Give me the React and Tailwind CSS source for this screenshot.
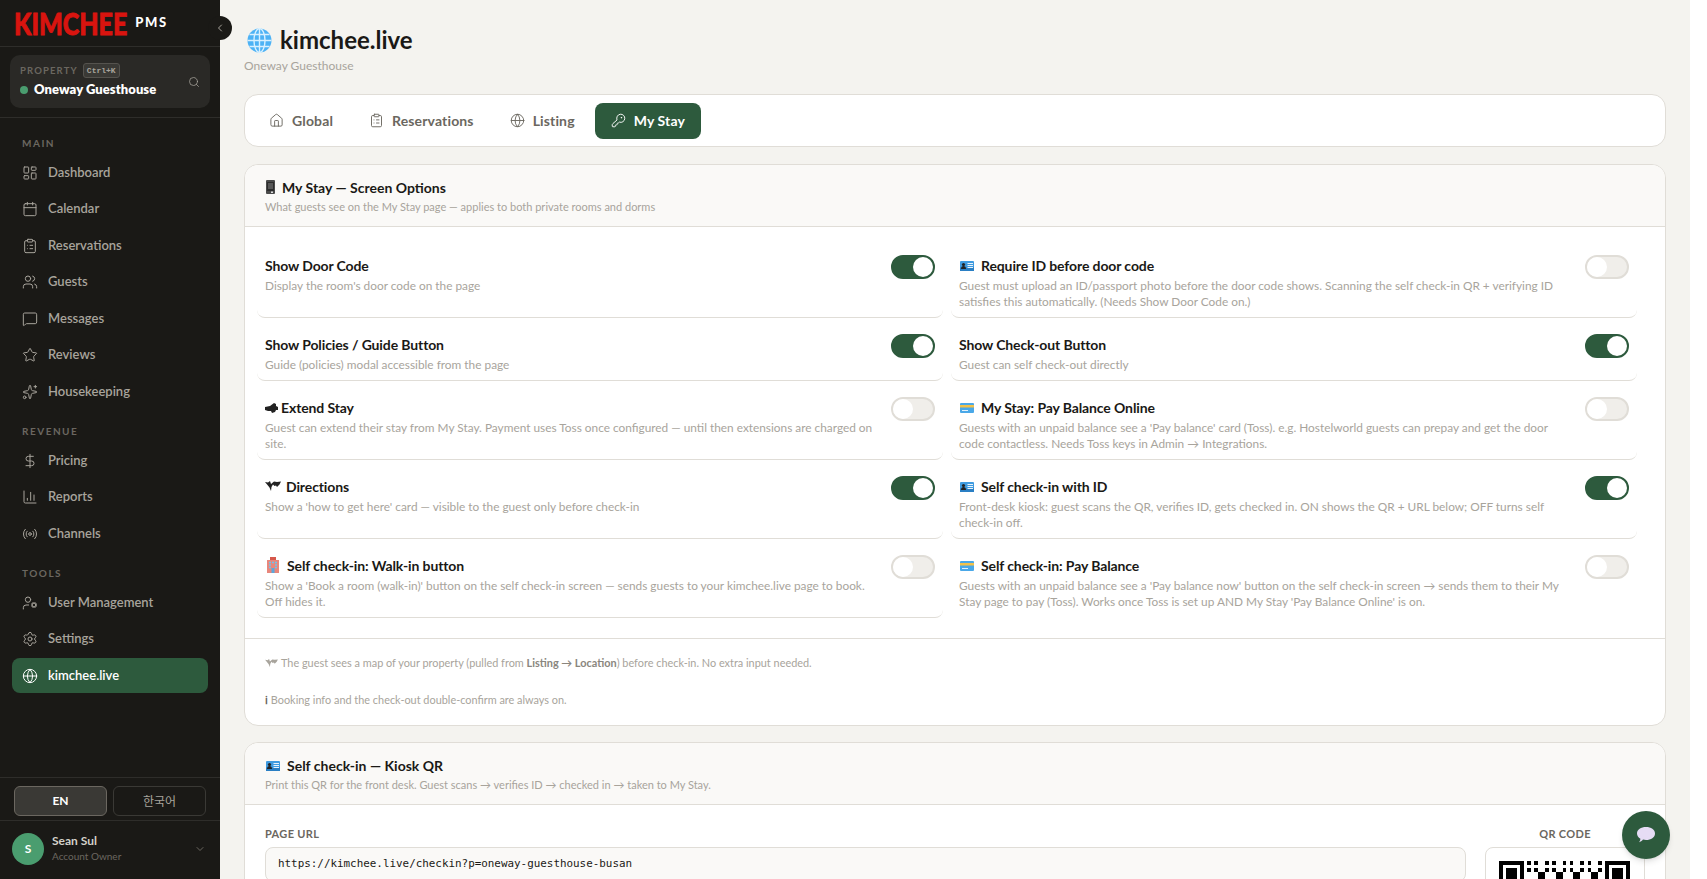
import React from 'react';
import {
  LayoutDashboard, Calendar, ClipboardList, Users, MessageSquare, Star, Sparkles,
  DollarSign, ChartColumn, Radio, UserCog, Settings, Globe, Search, ChevronLeft,
  ChevronDown, House, KeyRound,
} from 'lucide-react';

const mainNav = [
  { label: 'Dashboard', icon: LayoutDashboard },
  { label: 'Calendar', icon: Calendar },
  { label: 'Reservations', icon: ClipboardList },
  { label: 'Guests', icon: Users },
  { label: 'Messages', icon: MessageSquare },
  { label: 'Reviews', icon: Star },
  { label: 'Housekeeping', icon: Sparkles },
];
const revenueNav = [
  { label: 'Pricing', icon: DollarSign },
  { label: 'Reports', icon: ChartColumn },
  { label: 'Channels', icon: Radio },
];
const toolsNav = [
  { label: 'User Management', icon: UserCog },
  { label: 'Settings', icon: Settings },
  { label: 'kimchee.live', icon: Globe, active: true },
];

function NavItem({ item }) {
  const Icon = item.icon;
  return (
    <div
      className={`flex h-[35px] items-center gap-[10px] rounded-lg px-[10px] text-[13px] font-semibold ${
        item.active ? 'bg-[#2d5a3d] text-white' : 'text-[#a8a49c]'
      }`}
    >
      <Icon size={16} strokeWidth={1.5} />
      <span>{item.label}</span>
    </div>
  );
}

function NavGroup({ label, items, className }) {
  return (
    <div className={className}>
      <div className="mb-[5px] h-[14px] pl-[10px] text-[10px] leading-[14px] font-bold tracking-[0.15em] text-[#6b6760]">{label}</div>
      <div className="flex flex-col gap-[1.5px]">
        {items.map((item) => (
          <NavItem key={item.label} item={item} />
        ))}
      </div>
    </div>
  );
}

function Sidebar() {
  return (
    <aside className="relative flex h-full w-[220px] shrink-0 flex-col bg-[#1a1916]">
      <div className="flex h-[47px] items-center gap-2 border-b border-[#2e2d2a] pl-[14px]">
        <span className="inline-block scale-y-[1.2] text-[25px] leading-none font-black text-[#d9140f] [-webkit-text-stroke:0.7px_#d9140f]">KIMCHEE</span>
        <span className="text-[13px] font-black tracking-[0.12em] text-white">PMS</span>
      </div>
      <div className="border-b border-[#2e2d2a] px-[10px] pt-2 pb-[9px]">
        <div className="flex h-[53px] items-center justify-between rounded-[10px] bg-[#2a2926] px-[10px]">
          <div>
            <div className="flex items-center gap-[5px]">
              <span className="text-[9.5px] font-bold tracking-[0.12em] text-[#6b6760]">PROPERTY</span>
              <span className="rounded-[3px] border border-[#55534e] bg-[#3a3935] px-[3px] font-['Liberation_Mono'] text-[8px] leading-[13px] font-bold text-[#a8a49c]">Ctrl+K</span>
            </div>
            <div className="mt-[2px] flex items-center gap-[6px]">
              <span className="h-2 w-2 rounded-full bg-[#4a9d6f]" />
              <span className="text-[13px] font-extrabold tracking-[0.005em] text-white">Oneway Guesthouse</span>
            </div>
          </div>
          <Search size={12} strokeWidth={1.5} className="text-[#a8a49c]" />
        </div>
      </div>
      <div className="flex-1 px-[12px] pt-[18px]">
        <NavGroup label="MAIN" items={mainNav} />
        <NavGroup label="REVENUE" items={revenueNav} className="mt-[15px]" />
        <NavGroup label="TOOLS" items={toolsNav} className="mt-[15px]" />
      </div>
      <div className="flex h-[44px] gap-[6px] border-y border-[#2e2d2a] px-[14px] pt-2">
        <div className="flex h-[30px] flex-1 items-center justify-center rounded-md border border-[#6b6760] bg-[#3a3935] text-[12px] font-bold text-white">EN</div>
        <div className="flex h-[30px] flex-1 items-center justify-center rounded-md border border-[#3a3935] font-['Noto_Sans_CJK_KR'] text-[12px] text-[#a8a49c]">한국어</div>
      </div>
      <div className="flex h-[58px] items-start gap-2 px-3 pt-[12px]">
        <div className="flex h-8 w-8 items-center justify-center rounded-full bg-[#4a9d6f] text-[12px] font-bold text-white">S</div>
        <div className="flex-1">
          <div className="text-[12px] leading-[16px] font-bold text-[#d4d1ca]">Sean Sul</div>
          <div className="text-[10px] leading-[14px] text-[#6b6760]">Account Owner</div>
        </div>
        <ChevronDown size={12} className="mt-[10px] mr-[2px] text-[#6b6760]" />
      </div>
      <div className="absolute top-4 -right-3 flex h-6 w-6 items-center justify-center rounded-full bg-[#1a1916] text-[#a8a49c]">
        <ChevronLeft size={12} />
      </div>
    </aside>
  );
}

function GlobeEmoji() {
  return (
    <svg width="25" height="25" viewBox="0 0 25 25" fill="none">
      <circle cx="12.5" cy="12.5" r="12" fill="#4db2f5" />
      <g stroke="#d8f0ff" strokeWidth="1.4">
        <ellipse cx="12.5" cy="12.5" rx="5.5" ry="12" />
        <path d="M12.5 .5v24M.5 12.5h24M2.5 6.5h20M2.5 18.5h20" />
      </g>
    </svg>
  );
}

function PhoneEmoji() {
  return (
    <svg width="11" height="14" viewBox="0 0 11 14">
      <rect x="1" width="9" height="14" rx="1" fill="#4a4a4a" />
      <rect x="2" y="2" width="7" height="9" fill="#2c2c2c" />
      <path d="M3 4h5M3 6h5M3 8h5" stroke="#9a9a9a" strokeWidth=".8" />
      <rect x="6" y="11.5" width="2" height="1.5" fill="#ddd" />
    </svg>
  );
}

function IdEmoji() {
  return (
    <svg width="16" height="12" viewBox="-1 0 16 12" className="mt-[2px]">
      <rect y="1" width="14" height="10" rx="1" fill="#3f9be0" />
      <rect y="7.5" width="14" height="3.5" fill="#2a7fc4" />
      <circle cx="3.5" cy="4.5" r="1.6" fill="#222" />
      <path d="M1 9c0-2 1-3 2.5-3S6 7 6 9z" fill="#222" />
      <path d="M7.5 3.5H13M7.5 5.5H13M7.5 7.5H13" stroke="#e8f3fb" />
    </svg>
  );
}

function CardEmoji() {
  return (
    <svg width="16" height="12" viewBox="-1 0 16 12" className="mt-[2px]">
      <rect y="1" width="14" height="10" rx="1" fill="#4aa8e8" />
      <rect y="3" width="14" height="2.5" fill="#f2c14a" />
      <path d="M2 8.5h6" stroke="#e3f2fc" />
    </svg>
  );
}

function HotelEmoji() {
  return (
    <svg width="16" height="16" viewBox="-1 0 16 16">
      <rect x="1" y="3" width="12" height="13" fill="#e8877c" />
      <rect x="4" y="0" width="6" height="3" fill="#d6584c" />
      <path d="M3 5.500h2M6 5.500h2M9 5.500h2M3 8h2M9 8h2M3 10.500h2M9 10.500h2" stroke="#6fc3ee" strokeWidth="1.4" />
      <rect x="5.500" y="11" width="3" height="5" fill="#5ba8dc" />
    </svg>
  );
}

function BellEmoji() {
  return (
    <svg width="13" height="11" viewBox="0 0 13 11" className="mt-[2px] -mr-[3px]">
      <path d="M0 4l5-1 4-3 2 1v2l2 1v3h-2l-1 2-3 1-1-2H3L0 7z" fill="#222" />
    </svg>
  );
}

function MapEmoji({ muted }) {
  return (
    <svg width="16" height="10" viewBox="0 0 16 10" className={muted ? 'h-[8px] w-[13px]' : '-mr-[1px]'}>
      <path d="M0 1l3 .5L5 0l1 3 3-2.500 3 .5 4-.5-1.500 3L12 6l-1-1.500L9.500 5 8 3.500 6.500 6 6 10 4.500 6.500 2.500 4z" fill={muted ? '#a8a49c' : '#222'} />
    </svg>
  );
}

function Toggle({ on }) {
  return (
    <div
      className={`flex h-6 w-11 shrink-0 items-center rounded-full border-2 ${
        on ? 'justify-end border-[#2d5a3d] bg-[#2d5a3d]' : 'justify-start border-[#e0ddd7] bg-[#f0eeea]'
      }`}
    >
      <div className="h-5 w-5 rounded-full bg-white" />
    </div>
  );
}

function OptionRow({ icon, title, desc, on, noBorder }) {
  return (
    <div className={`flex h-full items-start justify-between gap-3 rounded-lg px-2 pt-4 pb-[7px] ${noBorder ? '' : 'border-b border-[#e0ddd7]'}`}>
      <div className="min-w-0">
        <div className="flex h-5 items-center gap-[6px] text-[14px] font-bold tracking-[-0.008em] text-[#1a1916]">
          {icon}
          <span>{title}</span>
        </div>
        <p className="mt-[3px] text-[11.85px] leading-[16px] text-[#a8a49c]">{desc}</p>
      </div>
      <Toggle on={on} />
    </div>
  );
}

function CardHeader({ icon, title, desc }) {
  return (
    <div className="border-b border-[#e0ddd7] bg-[#faf9f7] px-5 pt-3 pb-[10px]">
      <div className="flex h-5 items-center gap-[6px] text-[14px] font-bold text-[#1a1916]">
        {icon}
        <span>{title}</span>
      </div>
      <p className="mt-[1px] text-[11px] leading-[18px] text-[#a8a49c]">{desc}</p>
    </div>
  );
}

// fake QR: finder squares plus fixed pseudo-random modules
function QrCode() {
  const n = 37;
  const cells = [];
  const inFinder = (x, y) => (x < 8 && y < 8) || (x >= n - 8 && y < 8) || (x < 8 && y >= n - 8);
  for (let y = 0; y < n; y++) {
    for (let x = 0; x < n; x++) {
      if (!inFinder(x, y) && ((x * 7 + y * 13 + x * y * 3) % 5 < 2)) cells.push(`M${x} ${y}h1v1h-1z`);
    }
  }
  const finder = (x, y) => `M${x} ${y}h7v7h-7zM${x + 1} ${y + 1}v5h5v-5zM${x + 2} ${y + 2}h3v3h-3z`;
  return (
    <svg width="131" height="131" viewBox="0 0 37 37" shapeRendering="crispEdges">
      <path d={cells.join('')} fill="#000" />
      <path d={finder(0, 0) + finder(30, 0) + finder(0, 30)} fill="#000" fillRule="evenodd" />
    </svg>
  );
}

const tabs = [
  { label: 'Global', icon: House },
  { label: 'Reservations', icon: ClipboardList },
  { label: 'Listing', icon: Globe },
  { label: 'My Stay', icon: KeyRound, active: true },
];

function Main() {
  return (
    <main className="h-full min-w-0 flex-1 overflow-hidden bg-[#f4f3ef] px-6 pt-6">
      <div className="flex h-8 items-center gap-2 pl-[3px] text-[24px] font-bold text-[#1a1916]">
        <GlobeEmoji />
        <span>kimchee.live</span>
      </div>
      <p className="mt-[1px] text-[12px] leading-[18px] text-[#a8a49c]">Oneway Guesthouse</p>

      <div className="mt-[19px] flex h-[53px] items-center gap-1 rounded-[14px] border border-[#e0ddd7] bg-white px-2">
        {tabs.map((tab) => {
          const Icon = tab.icon;
          return (
            <div
              key={tab.label}
              className={`flex h-9 items-center gap-2 rounded-lg px-4 text-[14px] font-bold tracking-[0.01em] ${
                tab.active ? 'bg-[#2d5a3d] text-white' : 'text-[#6b6760]'
              }`}
            >
              <Icon size={15} strokeWidth={1.5} />
              <span>{tab.label}</span>
            </div>
          );
        })}
      </div>

      <section className="mt-[17px] overflow-hidden rounded-[14px] border border-[#e0ddd7] bg-white">
        <CardHeader icon={<PhoneEmoji />} title="My Stay — Screen Options" desc="What guests see on the My Stay page — applies to both private rooms and dorms" />
        <div className="grid grid-cols-2 gap-x-2 border-b border-[#e0ddd7] pt-3 pr-7 pb-5 pl-3">
          <OptionRow title="Show Door Code" desc="Display the room's door code on the page" on />
          <OptionRow icon={<IdEmoji />} title="Require ID before door code" desc="Guest must upload an ID/passport photo before the door code shows. Scanning the self check-in QR + verifying ID satisfies this automatically. (Needs Show Door Code on.)" />
          <OptionRow title="Show Policies / Guide Button" desc="Guide (policies) modal accessible from the page" on />
          <OptionRow title="Show Check-out Button" desc="Guest can self check-out directly" on />
          <OptionRow icon={<BellEmoji />} title="Extend Stay" desc="Guest can extend their stay from My Stay. Payment uses Toss once configured — until then extensions are charged on site." />
          <OptionRow icon={<CardEmoji />} title="My Stay: Pay Balance Online" desc="Guests with an unpaid balance see a 'Pay balance' card (Toss). e.g. Hostelworld guests can prepay and get the door code contactless. Needs Toss keys in Admin → Integrations." />
          <OptionRow icon={<MapEmoji />} title="Directions" desc="Show a 'how to get here' card — visible to the guest only before check-in" on />
          <OptionRow icon={<IdEmoji />} title="Self check-in with ID" desc="Front-desk kiosk: guest scans the QR, verifies ID, gets checked in. ON shows the QR + URL below; OFF turns self check-in off." on />
          <OptionRow icon={<HotelEmoji />} title="Self check-in: Walk-in button" desc="Show a 'Book a room (walk-in)' button on the self check-in screen — sends guests to your kimchee.live page to book. Off hides it." />
          <OptionRow icon={<CardEmoji />} title="Self check-in: Pay Balance" desc="Guests with an unpaid balance see a 'Pay balance now' button on the self check-in screen → sends them to their My Stay page to pay (Toss). Works once Toss is set up AND My Stay 'Pay Balance Online' is on." noBorder />
        </div>
        <div className="px-5 pt-4 pb-[17px] text-[10.9px] leading-[16px] text-[#a8a49c]">
          <p className="flex items-center gap-[3px]">
            <MapEmoji muted />
            <span>The guest sees a map of your property (pulled from <b className="text-[#8a867e]">Listing → Location</b>) before check-in. No extra input needed.</span>
          </p>
          <p className="mt-[21px]"><b className="text-[#6b6760]">ℹ</b> Booking info and the check-out double-confirm are always on.</p>
        </div>
      </section>

      <section className="mt-4 overflow-hidden rounded-[14px] border border-[#e0ddd7] bg-white">
        <CardHeader icon={<IdEmoji />} title="Self check-in — Kiosk QR" desc="Print this QR for the front desk. Guest scans → verifies ID → checked in → taken to My Stay." />
        <div className="flex gap-[19px] px-5 pt-[21px] pb-5">
          <div className="flex-1">
            <div className="mb-[5px] text-[11px] leading-[16px] font-bold tracking-[0.03em] text-[#6b6760]">PAGE URL</div>
            <div className="flex h-[35px] items-center rounded-lg border border-[#e0ddd7] bg-[#faf9f7] px-3 font-['DejaVu_Sans_Mono'] text-[10.9px] text-[#1a1916]">
              https://kimchee.live/checkin?p=oneway-guesthouse-busan
            </div>
          </div>
          <div className="w-[160px]">
            <div className="mb-[5px] text-center text-[11px] leading-[16px] font-bold tracking-[0.03em] text-[#6b6760]">QR CODE</div>
            <div className="rounded-lg border border-[#e0ddd7] bg-white p-[13px]">
              <QrCode />
            </div>
          </div>
        </div>
      </section>
    </main>
  );
}

function ChatButton() {
  return (
    <div className="absolute top-[811px] left-[1622px] flex h-12 w-12 items-center justify-center rounded-full bg-[#2d5a3d] shadow-md">
      <svg width="20" height="18" viewBox="0 0 20 18">
        <path d="M10 1c5 0 9 2.600 9 6.500S15 14 10 14c-1 0-2-.1-3-.4C6 15 4.500 16 3 16.300c.8-1 1.300-2.100 1.400-3.600C2.400 11.500 1 9.700 1 7.500 1 3.600 5 1 10 1z" fill="#e6dcf5" />
      </svg>
    </div>
  );
}

export default function App() {
  return (
    <div className="relative flex h-screen w-full overflow-hidden bg-white font-['Lato','Liberation_Sans',sans-serif]">
      <Sidebar />
      <Main />
      <div className="w-[17px] shrink-0 bg-white" />
      <ChatButton />
    </div>
  );
}
